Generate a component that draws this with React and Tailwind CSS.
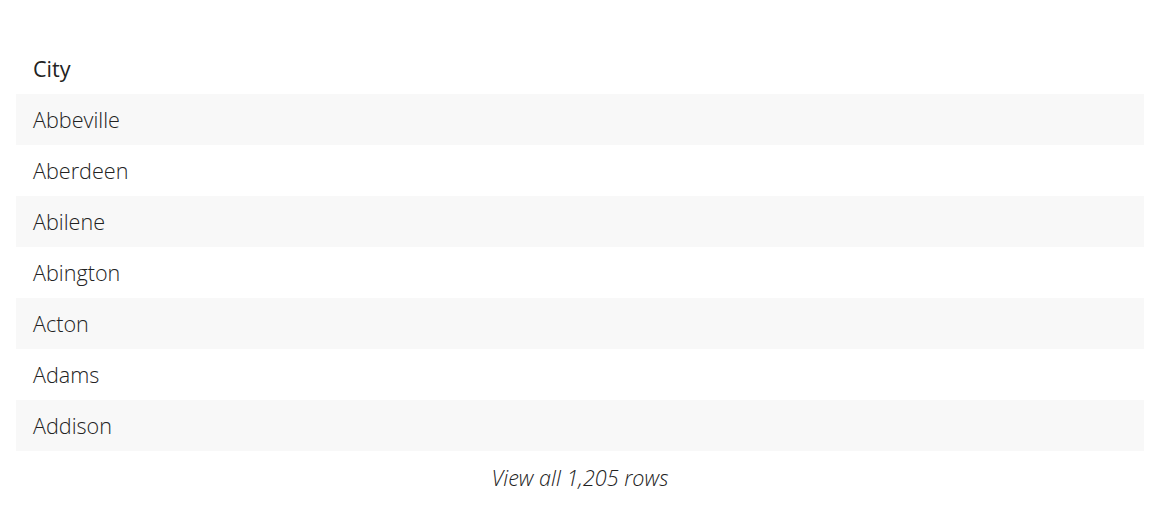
import React from 'react';

const cities = ['Abbeville', 'Aberdeen', 'Abilene', 'Abington', 'Acton', 'Adams', 'Addison'];

export default function App() {
    return (
        <div className="min-h-screen bg-white pl-4 pr-[15px] pt-[44px] font-['Open_Sans',sans-serif] text-[#222]">
            <table className="w-full border-collapse">
                <thead>
                    <tr>
                        <th className="h-[50px] px-[17px] text-left align-middle text-[21.6px] font-normal leading-none">City</th>
                    </tr>
                </thead>
                <tbody>
                    {cities.map((city, i) => (
                        <tr key={city} className={i % 2 === 0 ? 'bg-[#f8f8f8]' : 'bg-white'}>
                            <td className="h-[51px] px-[17px] pt-[1px] align-middle text-[21.6px] font-light leading-none">{city}</td>
                        </tr>
                    ))}
                </tbody>
            </table>
            <div className="pt-[16px] text-center text-[21.6px] font-light italic leading-none">View all 1,205 rows</div>
        </div>
    );
}
